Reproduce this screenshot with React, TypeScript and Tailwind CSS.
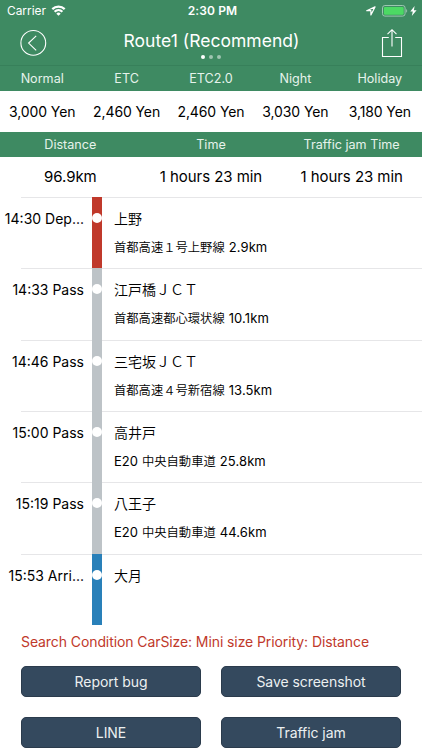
import clsx from "clsx";

const fares = [
  { label: "Normal", value: "3,000 Yen" },
  { label: "ETC", value: "2,460 Yen" },
  { label: "ETC2.0", value: "2,460 Yen" },
  { label: "Night", value: "3,030 Yen" },
  { label: "Holiday", value: "3,180 Yen" },
];

const summary = [
  { label: "Distance", value: "96.9km" },
  { label: "Time", value: "1 hours 23 min" },
  { label: "Traffic jam Time", value: "1 hours 23 min" },
];

const stops = [
  { time: "14:30 Dep...", name: "上野", road: "首都高速１号上野線", km: "2.9km", bar: "bg-[#c0392b]" },
  { time: "14:33 Pass", name: "江戸橋ＪＣＴ", road: "首都高速都心環状線", km: "10.1km", bar: "bg-[#bdc3c7]" },
  { time: "14:46 Pass", name: "三宅坂ＪＣＴ", road: "首都高速４号新宿線", km: "13.5km", bar: "bg-[#bdc3c7]" },
  { time: "15:00 Pass", name: "高井戸", code: "E20", road: "中央自動車道", km: "25.8km", bar: "bg-[#bdc3c7]" },
  { time: "15:19 Pass", name: "八王子", code: "E20", road: "中央自動車道", km: "44.6km", bar: "bg-[#bdc3c7]" },
  { time: "15:53 Arri...", name: "大月", bar: "bg-[#2980b9]" },
];

const actions = ["Report bug", "Save screenshot", "LINE", "Traffic jam"];

function StatusBar() {
  return (
    <div className="grid h-[21px] grid-cols-3 items-center pr-[5px] pl-[7px] text-[12px]">
      <div className="flex items-center gap-[5px]">
        <span className="text-[11.9px]">Carrier</span>
        <svg width="15" height="11" viewBox="0 0 14 11" fill="none" stroke="white" strokeWidth="2.2">
          <path d="M0.8 4.1a8.9 8.9 0 0 1 12.4 0" />
          <path d="M3.1 6.8a5.6 5.6 0 0 1 7.8 0" />
          <path d="M7 10.8 4.8 8.7a3 3 0 0 1 4.4 0Z" fill="white" stroke="none" />
        </svg>
      </div>
      <span className="pl-[1px] text-center font-semibold tracking-[0.1px]">2:30 PM</span>
      <div className="flex items-center justify-end">
        <svg width="10" height="10" viewBox="0 0 10 10" fill="none" stroke="white" strokeWidth="1.2" strokeLinejoin="round">
          <path d="M9 0.9 0.7 4.7h4.2v4.2Z" />
        </svg>
        <svg className="ml-[6px]" width="26" height="12" viewBox="0 0 26 12" fill="none">
          <rect x="0.5" y="0.5" width="22.6" height="10.6" rx="2.4" stroke="#9cc7b0" />
          <rect x="1.9" y="1.9" width="19.8" height="7.8" rx="1.2" fill="#4cd964" />
          <path d="M24.2 4v3.8c1.3-.5 1.3-3.3 0-3.8Z" fill="#9cc7b0" />
        </svg>
        <svg className="ml-[2px]" width="7" height="10" viewBox="0 0 7 10" fill="white">
          <path d="M4.6 0 0.3 5.5h2.5L1.8 10 6.6 4.2H3.9Z" />
        </svg>
      </div>
    </div>
  );
}

function NavBar() {
  return (
    <div className="flex h-[45px] items-start justify-between border-b border-[#37805a] pr-[19px] pl-[20px]">
      <button aria-label="Back" className="mt-[8px]">
        <svg width="27" height="27" viewBox="0 0 27 27" fill="none" stroke="white" strokeWidth="1.1">
          <circle cx="13.3" cy="13.9" r="12.4" />
          <path d="M16.2 6.8 8.6 14.1l7.6 7.3" />
        </svg>
      </button>
      <div className="mr-[5px] flex flex-col items-center">
        <h1 className="mt-[7px] text-[17.5px] leading-[26px] tracking-[0.03px]">Route1 (Recommend)</h1>
        <div className="mt-[1px] flex gap-[4px]">
          <span className="size-[4px] rounded-full bg-white" />
          <span className="size-[4px] rounded-full bg-white/50" />
          <span className="size-[4px] rounded-full bg-white/50" />
        </div>
      </div>
      <button aria-label="Share" className="mt-[7px]">
        <svg width="22" height="30" viewBox="0 0 22 30" fill="none" stroke="white" strokeWidth="1.1">
          <path d="M7.8 9.5H1.5v19h19v-19h-6.3" />
          <path d="M11 18.5V1.8M6.5 6.2 11 1.7l4.5 4.5" />
        </svg>
      </button>
    </div>
  );
}

export default function App() {
  return (
    <div className="flex h-[750px] w-[422px] flex-col overflow-hidden bg-white font-['Inter','Noto_Sans_CJK_JP',sans-serif] text-black">
      <header className="bg-[#3e8a62] text-white">
        <StatusBar />
        <NavBar />
      </header>

      <div className="grid h-[25px] grid-cols-5 items-center bg-[#3e8a62] pt-px text-center text-[12.6px] text-[#e6f3eb]">
        {fares.map((f) => (
          <span key={f.label}>{f.label}</span>
        ))}
      </div>
      <div className="grid h-[41px] grid-cols-5 items-center text-center text-[14px] whitespace-nowrap">
        {fares.map((f) => (
          <span key={f.label} className="tracking-[-0.1px]">{f.value}</span>
        ))}
      </div>
      <div className="grid h-[25px] grid-cols-3 items-center bg-[#3e8a62] pt-px text-center text-[12.6px] text-[#e6f3eb]">
        {summary.map((s) => (
          <span key={s.label}>{s.label}</span>
        ))}
      </div>
      <div className="grid h-[40px] grid-cols-3 items-center pt-px text-center text-[15px] whitespace-nowrap">
        {summary.map((s) => (
          <span key={s.label} className="tracking-[-0.05px]">{s.value}</span>
        ))}
      </div>

      <ul className="grid h-[428px] grid-rows-6">
        {stops.map((stop) => (
          <li key={stop.time} className="relative flex before:absolute before:top-0 before:right-0 before:left-[21px] before:h-px before:bg-[#e6e6e8]">
            <div className="w-[84px] shrink-0 pt-[12px] text-right text-[14px] leading-[20px] whitespace-nowrap">{stop.time}</div>
            <div className={clsx("relative ml-[8px] flex w-[10px] shrink-0 justify-center pt-[16px]", stop.bar)}>
              <span className="size-[10px] shrink-0 rounded-full bg-white" />
            </div>
            <div className="pt-[11px] pl-[12px]">
              <p className="text-[14px] leading-[22px] font-[350]">{stop.name}</p>
              {stop.road && (
                <p className="mt-[8px] flex items-baseline gap-[4px] text-[13px] leading-[18px]">
                  {stop.code && <span>{stop.code}</span>}
                  <span className="text-[12.3px] font-[350]">{stop.road}</span>
                  <span className="tracking-[0.1px]">{stop.km}</span>
                </p>
              )}
            </div>
          </li>
        ))}
      </ul>

      <p className="mt-[7px] pl-[21px] text-[14px] leading-[20px] tracking-[-0.09px] text-[#c0392b]">
        Search Condition CarSize: Mini size Priority: Distance
      </p>
      <div className="mt-[14px] grid grid-cols-2 gap-[20px] px-[21px]">
        {actions.map((a) => (
          <button key={a} className="h-[31px] rounded-[5px] border border-[#2b3b4c] bg-[#34495e] text-[14px] tracking-[-0.05px] text-[#ecf0f1]">
            {a}
          </button>
        ))}
      </div>
    </div>
  );
}
